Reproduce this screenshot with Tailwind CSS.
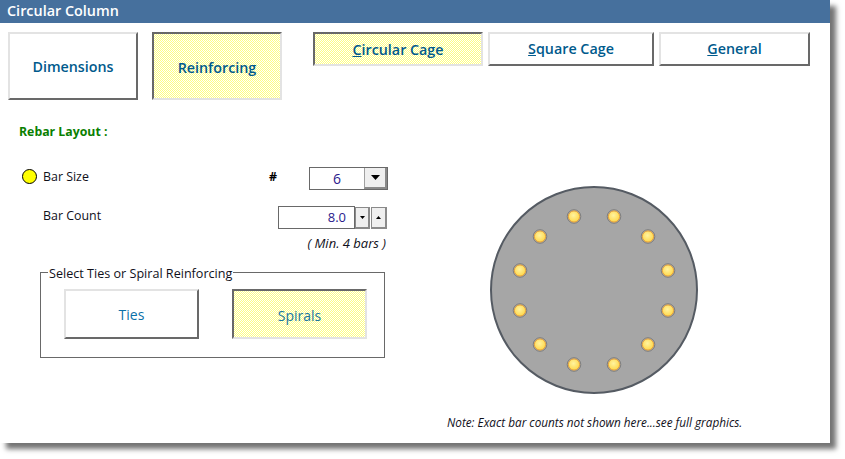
<!DOCTYPE html>
<html lang="en">
<head>
    <meta charset="UTF-8">
    <title>Circular Column</title>
    <script src="https://cdn.jsdelivr.net/npm/@tailwindcss/browser@4"></script>
</head>
<body class="bg-white font-['Open_Sans','Noto_Sans',sans-serif]">
<!-- 1px dither used by the pressed buttons -->
<svg width="0" height="0" class="absolute">
    <defs>
        <pattern id="dither" width="2" height="2" patternUnits="userSpaceOnUse">
            <rect width="2" height="2" fill="#ffffff"/>
            <rect width="1" height="1" fill="#ffff80"/>
            <rect x="1" y="1" width="1" height="1" fill="#ffff80"/>
        </pattern>
    </defs>
</svg>
<div class="w-[845px] h-[459px] overflow-hidden">
    <!-- Window -->
    <div class="w-[830px] h-[443px] bg-white shadow-[6px_6px_5px_rgba(0,0,0,0.55)] flex flex-col">
        <div class="h-[23px] bg-[#46709d] text-white text-[14.4px] font-semibold pl-[7px] leading-[21px]">Circular Column</div>

        <!-- Top buttons -->
        <div class="flex items-start pt-[9px] pl-[8px]">
            <button class="w-[130px] h-[68px] pt-[1px] bg-white border-2 border-[#e3e3e3] border-r-[#696969] border-b-[#696969] text-[#005a8c] text-[14.3px] font-semibold">Dimensions</button>
            <button class="relative w-[130px] h-[68px] ml-[14px] pt-[3px] border-2 border-[#e3e3e3] border-l-[#696969] border-t-[#696969] text-[#005a8c] text-[14.3px] font-semibold">
                <svg class="absolute inset-0 w-full h-full"><rect width="100%" height="100%" fill="url(#dither)" shape-rendering="crispEdges"/></svg>
                <span class="relative">Reinforcing</span>
            </button>
            <button class="relative w-[170px] h-[34px] ml-[31px] pt-[2px] border-2 border-[#e3e3e3] border-l-[#696969] border-t-[#696969] text-[#005a8c] text-[14.3px] font-semibold">
                <svg class="absolute inset-0 w-full h-full"><rect width="100%" height="100%" fill="url(#dither)" shape-rendering="crispEdges"/></svg>
                <span class="relative"><span class="underline">C</span>ircular Cage</span>
            </button>
            <button class="w-[166px] h-[34px] ml-[5px] bg-white border-2 border-[#e3e3e3] border-r-[#696969] border-b-[#696969] text-[#005a8c] text-[14.3px] font-semibold"><span class="underline">S</span>quare Cage</button>
            <button class="w-[151px] h-[34px] ml-[5px] bg-white border-2 border-[#e3e3e3] border-r-[#696969] border-b-[#696969] text-[#005a8c] text-[14.3px] font-semibold"><span class="underline">G</span>eneral</button>
        </div>

        <div class="flex">
            <!-- Left column -->
            <div class="w-[420px] pl-[19px] text-[12.4px] text-[#10101a]">
                <div class="mt-[23px] h-[18px] leading-[18px] text-[#0a8000] text-[12.3px] font-bold">Rebar Layout :</div>

                <div class="mt-[26px] h-[23px] flex items-center">
                    <span class="w-[15px] h-[15px] ml-[3px] -mt-[4px] rounded-full bg-[#ffff00] border border-black"></span>
                    <span class="ml-[6px] w-[226px] -mt-[3px]">Bar Size</span>
                    <span class="w-[40px] font-bold text-black -mt-[2px]">#</span>
                    <div class="w-[79px] h-[23px] flex border border-[#696969] bg-white">
                        <span class="flex-1 text-center text-[14px] leading-[22px] text-[#2a1a8c]">6</span>
                        <span class="w-[23px] bg-[#efefef] border-l border-[#a0a0a0] border-r-2 border-b-2 border-r-[#8a8a8a] border-b-[#8a8a8a] flex items-center justify-center">
                            <svg width="9" height="5" viewBox="0 0 9 5"><path d="M0 0h9L4.5 5z" fill="#000"/></svg>
                        </span>
                    </div>
                </div>

                <div class="mt-[16px] h-[23px] flex items-center">
                    <span class="ml-[24px] w-[235px] -mt-[3px]">Bar Count</span>
                    <div class="w-[77px] h-[23px] border border-[#696969] bg-white text-right pr-[8px] text-[13px] leading-[21px] text-[#2a1a8c]">8.0</div>
                    <span class="w-[15px] h-[22px] bg-[#efefef] border border-[#8a8a8a] border-r-2 border-b-2 flex items-center justify-center">
                        <svg width="5" height="3" viewBox="0 0 5 3"><path d="M0 0h5L2.5 3z" fill="#000"/></svg>
                    </span>
                    <span class="w-[16px] h-[22px] ml-px bg-[#efefef] border border-[#8a8a8a] border-r-2 border-b-2 flex items-center justify-center">
                        <svg width="5" height="3" viewBox="0 0 5 3"><path d="M0 3h5L2.5 0z" fill="#000"/></svg>
                    </span>
                </div>

                <div class="w-[367px] text-right text-[13px] italic mt-[6px] h-[17px] leading-[17px]">( Min. 4 bars )</div>

                <fieldset class="w-[345px] h-[94px] ml-[21px] mt-[12px] border border-[#696969] pl-[23px]">
                    <legend class="-ml-[16px] px-[1px] h-[16px] leading-[19px] text-[12.6px]">Select Ties or Spiral Reinforcing</legend>
                    <div class="flex mt-[9px]">
                        <button class="w-[135px] h-[50px] bg-white border-2 border-[#e3e3e3] border-r-[#696969] border-b-[#696969] text-[#0a70a8] text-[14px]">Ties</button>
                        <button class="relative w-[135px] h-[50px] ml-[33px] pt-[2px] border-2 border-[#e3e3e3] border-l-[#696969] border-t-[#696969] text-[#1a78a0] text-[14px]">
                            <svg class="absolute inset-0 w-full h-full"><rect width="100%" height="100%" fill="url(#dither)" shape-rendering="crispEdges"/></svg>
                            <span class="relative">Spirals</span>
                        </button>
                    </div>
                </fieldset>
            </div>

            <!-- Right column: section drawing -->
            <div class="flex-1 text-[#10101a]">
                <svg class="mt-[85px] ml-[69px] block" width="210" height="210" viewBox="0 0 210 210">
                    <defs>
                        <radialGradient id="bar" cx="0.45" cy="0.4" r="0.6">
                            <stop offset="0" stop-color="#fff3a0"/>
                            <stop offset="1" stop-color="#ffd84a"/>
                        </radialGradient>
                    </defs>
                    <circle cx="105" cy="105" r="103" fill="#a6a6a6" stroke="#555b63" stroke-width="2"/>
                    <g fill="none" stroke="#7f7f7f" stroke-width="1" transform="translate(0 -0.5)">
                        <circle cx="85" cy="32" r="6.8"/>
                        <circle cx="125" cy="32" r="6.8"/>
                        <circle cx="159" cy="52" r="6.8"/>
                        <circle cx="179" cy="86" r="6.8"/>
                        <circle cx="179" cy="126" r="6.8"/>
                        <circle cx="159" cy="160" r="6.8"/>
                        <circle cx="125" cy="180" r="6.8"/>
                        <circle cx="85" cy="180" r="6.8"/>
                        <circle cx="51" cy="160" r="6.8"/>
                        <circle cx="31" cy="126" r="6.8"/>
                        <circle cx="31" cy="86" r="6.8"/>
                        <circle cx="51" cy="52" r="6.8"/>
                    </g>
                    <g fill="url(#bar)" stroke="#e8a23a" stroke-width="1" transform="translate(0 -0.5)">
                        <circle cx="85" cy="32" r="5.6"/>
                        <circle cx="125" cy="32" r="5.6"/>
                        <circle cx="159" cy="52" r="5.6"/>
                        <circle cx="179" cy="86" r="5.6"/>
                        <circle cx="179" cy="126" r="5.6"/>
                        <circle cx="159" cy="160" r="5.6"/>
                        <circle cx="125" cy="180" r="5.6"/>
                        <circle cx="85" cy="180" r="5.6"/>
                        <circle cx="51" cy="160" r="5.6"/>
                        <circle cx="31" cy="126" r="5.6"/>
                        <circle cx="31" cy="86" r="5.6"/>
                        <circle cx="51" cy="52" r="5.6"/>
                    </g>
                </svg>
                <div class="ml-[27px] mt-[19px] text-[11.75px] italic leading-[16px]">Note: Exact bar counts not shown here...see full graphics.</div>
            </div>
        </div>
    </div>
</div>
</body>
</html>
